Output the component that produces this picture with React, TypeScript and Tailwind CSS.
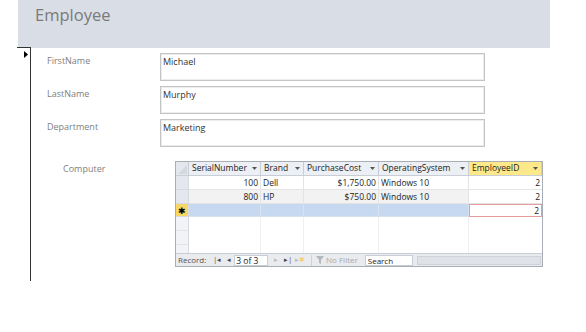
const cols = "grid grid-cols-[13px_72px_43px_75px_90px_1fr]";

function Arrow() {
  return (
    <svg width="5" height="3" viewBox="0 0 5 3" className="shrink-0">
      <path d="M0 0h5L2.5 3z" fill="#555" />
    </svg>
  );
}

function HeadCell({ label, yellow }: { label: string; yellow?: boolean }) {
  return (
    <div
      className={`h-[14px] flex items-center justify-between px-[3px] border-r border-b border-[#c9ced6] ${
        yellow ? "bg-[#fde98a]" : "bg-[#eceff3]"
      }`}
    >
      <span>{label}</span>
      <Arrow />
    </div>
  );
}

const rows = [
  { serial: "100", brand: "Dell", cost: "$1,750.00", os: "Windows 10", emp: "2" },
  { serial: "800", brand: "HP", cost: "$750.00", os: "Windows 10", emp: "2" },
];

export default function App() {
  return (
    <div className="w-[586px] h-[332px] bg-white overflow-hidden font-['Open_Sans',sans-serif] text-[#333]">
      {/* HEADER */}
      <div className="ml-[18px] w-[532px] h-[48px] bg-[#d9dde6] pl-[17px] pt-[3px] text-[16.5px] text-[#7a7a7a]">
        Employee
      </div>

      <div className="flex">
        {/* record selector */}
        <div className="ml-[17px] w-[14px] h-[233px] border-r border-[#333] relative">
          <div className="absolute -top-px left-0 w-[14px] border-t border-[#333]" />
          <svg width="4" height="7" viewBox="0 0 4 7" className="absolute top-[3px] left-[7px]">
            <path d="M0 0l4 3.5L0 7z" fill="#000" />
          </svg>
        </div>

        {/* DETAIL */}
        <div className="flex-1 pt-[5px]">
          <div className="flex flex-col gap-[5px]">
            {[
              ["FirstName", "Michael"],
              ["LastName", "Murphy"],
              ["Department", "Marketing"],
            ].map(([label, value]) => (
              <div key={label} className="flex">
                <div className="w-[129px] pl-[16px] pt-[1px] text-[9px] text-[#808080]">{label}</div>
                <div className="w-[325px] h-[28px] border border-[#c4c4c4] px-[2px] pt-[1px] text-[9px] text-[#333] shadow-[inset_0_0_0_1px_#ececec]">
                  {value}
                </div>
              </div>
            ))}
          </div>

          <div className="flex mt-[14px]">
            <div className="w-[144px] pl-[32px] pt-[1px] text-[9px] text-[#808080]">Computer</div>

            {/* SUBFORM DATASHEET */}
            <div className="w-[368px] h-[106px] border border-[#a9aeb6] flex flex-col text-[8.5px] text-[#222] bg-white">
              <div className={cols}>
                <div className="h-[14px] bg-[#e4e8ee] border-r border-b border-[#c9ced6] relative">
                  <svg width="9" height="9" viewBox="0 0 9 9" className="absolute right-[1px] bottom-[1px]">
                    <path d="M9 0v9H0z" fill="#d3d8e0" />
                  </svg>
                </div>
                <HeadCell label="SerialNumber" />
                <HeadCell label="Brand" />
                <HeadCell label="PurchaseCost" />
                <HeadCell label="OperatingSystem" />
                <HeadCell label="EmployeeID" yellow />
              </div>

              {rows.map((r, i) => (
                <div key={r.serial} className={`${cols} ${i === 1 ? "bg-[#f2f2f2]" : "bg-white"}`}>
                  <div className="h-[14px] bg-[#e4e8ee] border-r border-b border-[#d6dae0]" />
                  <div className="text-right pr-[2px] border-r border-b border-[#e4e4e4] leading-[13px]">{r.serial}</div>
                  <div className="pl-[2px] border-r border-b border-[#e4e4e4] leading-[13px]">{r.brand}</div>
                  <div className="text-right pr-[2px] border-r border-b border-[#e4e4e4] leading-[13px]">{r.cost}</div>
                  <div className="pl-[2px] border-r border-b border-[#e4e4e4] leading-[13px]">{r.os}</div>
                  <div className="text-right pr-[2px] border-b border-[#e4e4e4] leading-[13px] bg-white">{r.emp}</div>
                </div>
              ))}

              {/* new record row */}
              <div className={`${cols} bg-[#c6d9f0]`}>
                <div className="h-[13px] bg-[#f8d764] border-r border-b border-[#d6dae0] flex items-center justify-center text-[9px] leading-none text-black">
                  ✱
                </div>
                <div className="border-r border-b border-[#d8e2ee]" />
                <div className="border-r border-b border-[#d8e2ee]" />
                <div className="border-r border-b border-[#d8e2ee]" />
                <div className="border-r border-b border-[#d8e2ee]" />
                <div className="bg-white border border-[#e69a9a] text-right pr-[2px] leading-[11px]">2</div>
              </div>

              {/* empty rows */}
              <div className={`${cols} flex-1`}>
                <div className="bg-[#f1f3f6] border-r border-[#d6dae0] flex flex-col">
                  <div className="h-[14px] border-b border-[#e2e5ea]" />
                  <div className="h-[14px] border-b border-[#e2e5ea]" />
                </div>
                <div className="border-r border-[#f0f0f0]" />
                <div className="border-r border-[#f0f0f0]" />
                <div className="border-r border-[#f0f0f0]" />
                <div className="border-r border-[#f0f0f0]" />
                <div />
              </div>

              {/* navigation bar */}
              <div className="h-[13px] bg-[#e9ebee] border-t border-[#c9ced6] flex items-center text-[8px] text-[#555] gap-[3px] pl-[2px]">
                <span>Record:</span>
                <span className="text-[#444] ml-[4px] text-[7px]">|◂</span>
                <span className="text-[#444] ml-[3px] text-[7px]">◂</span>
                <div className="w-[34px] h-[11px] bg-white border border-[#c9ced6] pl-[1px] leading-[9px] text-[8.5px] text-[#222]">3 of 3</div>
                <span className="text-[#bbb] ml-[3px] text-[7px]">▸</span>
                <span className="text-[#444] ml-[3px] text-[7px]">▸|</span>
                <span className="text-[#bbb] text-[7px]">▸<span className="text-[#f3d26a]">✱</span></span>
                <div className="ml-[3px] border-l border-[#cfd3d9] h-[11px] flex items-center pl-[4px] gap-[2px] text-[#aaa]">
                  <svg width="8" height="8" viewBox="0 0 8 8">
                    <path d="M0 0h8L5 4v4L3 7V4z" fill="#b5b9bf" />
                  </svg>
                  No Filter
                </div>
                <div className="ml-[4px] w-[48px] h-[11px] bg-white border border-[#c9ced6] pl-[2px] leading-[9px] text-[#222]">
                  Search
                </div>
                <div className="flex-1 h-[9px] mx-[1px] bg-[#dfe2e6] border border-[#cfd3d9]" />
              </div>
            </div>
          </div>
        </div>
      </div>
    </div>
  );
}
